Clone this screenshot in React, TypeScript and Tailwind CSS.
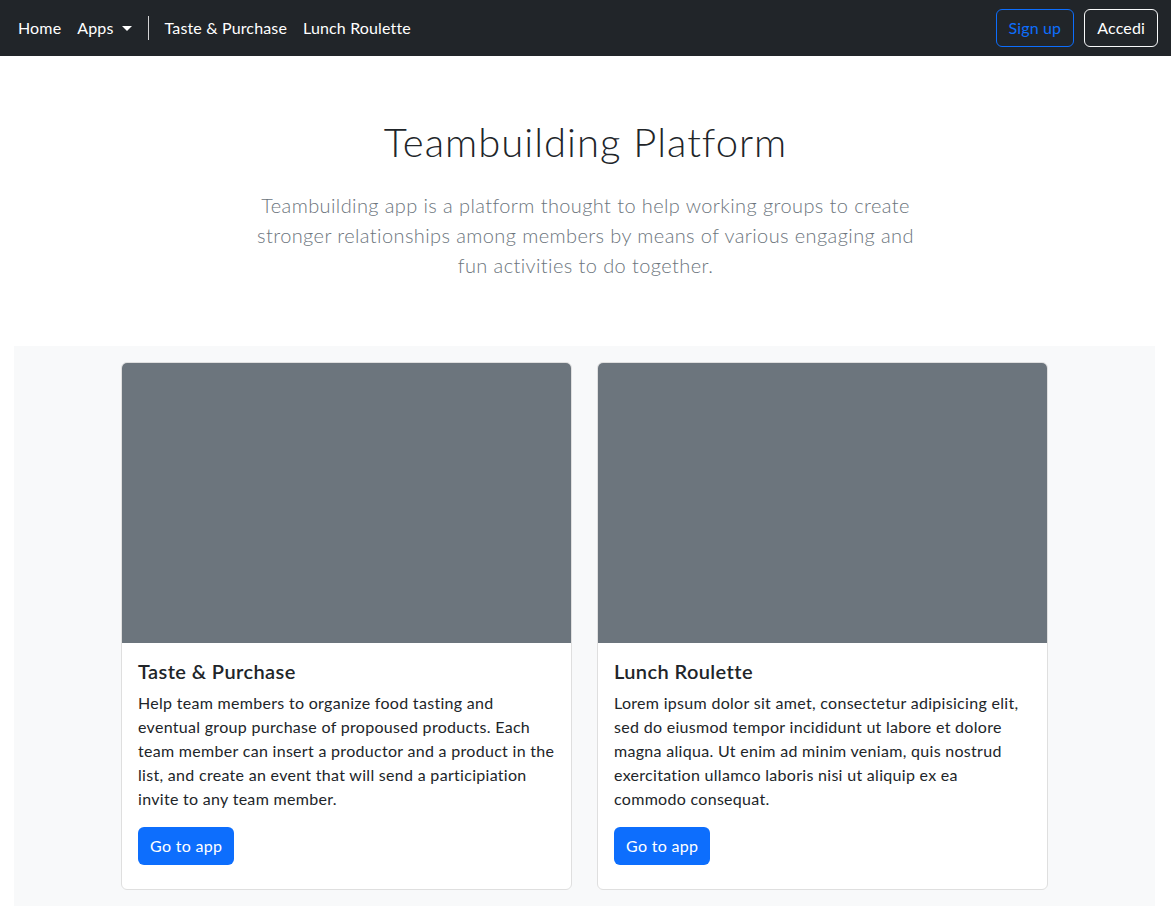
const apps = [
  {
    title: "Taste & Purchase",
    text: "Help team members to organize food tasting and eventual group purchase of propoused products. Each team member can insert a productor and a product in the list, and create an event that will send a participiation invite to any team member."
  },
  {
    title: "Lunch Roulette",
    text: "Lorem ipsum dolor sit amet, consectetur adipisicing elit, sed do eiusmod tempor incididunt ut labore et dolore magna aliqua. Ut enim ad minim veniam, quis nostrud exercitation ullamco laboris nisi ut aliquip ex ea commodo consequat."
  }
];

function Navbar() {
  return (
    <nav className="flex h-14 items-center justify-between bg-[#212529] pl-[18px] pr-[13px] text-base tracking-[0.15px] text-white">
      <div className="flex items-center">
        <a className="mr-4">Home</a>
        <a className="flex items-center">
          Apps
          <span className="ml-[8px] mt-[1px] h-0 w-0 border-x-[5px] border-t-[5px] border-x-transparent border-t-white" />
        </a>
        <span className="mx-4 h-6 w-px bg-white/80" />
        <a className="mr-4">Taste &amp; Purchase</a>
        <a>Lunch Roulette</a>
      </div>
      <div className="flex items-center gap-[10px]">
        <button className="h-[38px] rounded-md border border-[#0d6efd] px-3 text-[#0d6efd]">
          Sign up
        </button>
        <button className="h-[38px] rounded-md border border-[#f8f9fa] px-3 text-white">
          Accedi
        </button>
      </div>
    </nav>
  );
}

function AppCard({ title, text }: { title: string; text: string }) {
  return (
    <div className="overflow-hidden rounded-md border border-[#dfdfdf] bg-white">
      <div className="h-[280px] bg-[#6c757d]" />
      <div className="px-4 pt-4 pb-6">
        <h5 className="mb-2 text-[20px] font-semibold leading-6 tracking-[0.4px] text-[#212529]">
          {title}
        </h5>
        <p className="mb-4 text-base leading-6 text-[#212529]">{text}</p>
        <button className="h-[38px] rounded-md bg-[#0d6efd] px-3 text-base text-white">
          Go to app
        </button>
      </div>
    </div>
  );
}

export default function App() {
  return (
    <div className="min-h-[920px] bg-white font-['Lato','Liberation_Sans',sans-serif] tracking-[0.3px]">
      <Navbar />
      <section className="pt-[62px] pb-[66px] text-center">
        <h1 className="text-[40px] font-light leading-[48px] tracking-[1px] text-[#212529]">
          Teambuilding Platform
        </h1>
        <p className="mx-auto mt-6 max-w-[680px] text-[20px] font-light leading-[30px] tracking-[0.4px] text-[#6c757d]">
          Teambuilding app is a platform thought to help working groups to create stronger
          relationships among members by means of various engaging and fun activities to do
          together.
        </p>
      </section>
      <section className="ml-[14px] w-[1141px] bg-[#f8f9fa] py-4">
        <div className="mx-auto grid w-[927px] grid-cols-2 gap-[25px]">
          {apps.map((app) => (
            <AppCard key={app.title} title={app.title} text={app.text} />
          ))}
        </div>
      </section>
    </div>
  );
}
